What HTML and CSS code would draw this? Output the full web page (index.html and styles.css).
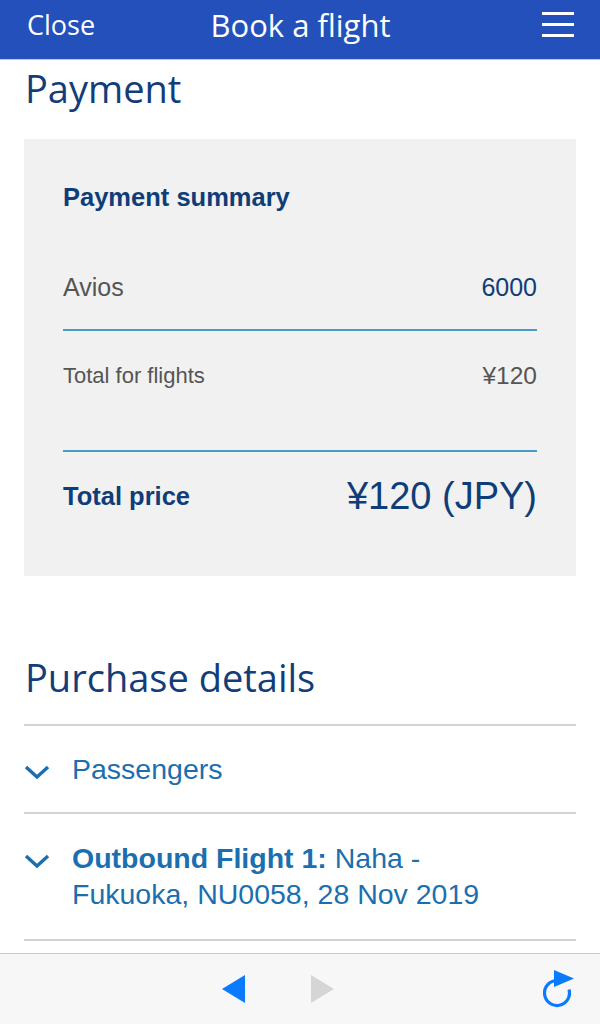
FILE: index.html
```html
<!DOCTYPE html>
<html lang="en">
<head>
    <meta charset="UTF-8">
    <meta name="viewport" content="width=device-width, initial-scale=1.0">
    <title>Book a flight</title>
    <link rel="stylesheet" href="styles.css">
</head>
<body>
    <header class="topbar">
        <a href="#" class="topbar-close">Close</a>
        <h1 class="topbar-title">Book a flight</h1>
        <button class="topbar-menu" aria-label="Menu">
            <span></span><span></span><span></span>
        </button>
    </header>

    <main class="page">
        <h2 class="page-heading">Payment</h2>

        <section class="summary">
            <h3 class="summary-title">Payment summary</h3>
            <div class="summary-row summary-avios">
                <span class="summary-label">Avios</span>
                <span class="summary-value">6000</span>
            </div>
            <div class="summary-row summary-flights">
                <span class="summary-label">Total for flights</span>
                <span class="summary-value">¥120</span>
            </div>
            <div class="summary-row summary-total">
                <span class="summary-label">Total price</span>
                <span class="summary-value">¥120 (JPY)</span>
            </div>
        </section>

        <h2 class="page-heading purchase-heading">Purchase details</h2>

        <ul class="details">
            <li class="details-item">
                <svg class="chevron" viewBox="0 0 26 14" aria-hidden="true"><path d="M2 2 L13 12 L24 2"/></svg>
                <span class="details-text">Passengers</span>
            </li>
            <li class="details-item">
                <svg class="chevron" viewBox="0 0 26 14" aria-hidden="true"><path d="M2 2 L13 12 L24 2"/></svg>
                <span class="details-text"><strong>Outbound Flight 1:</strong> Naha - Fukuoka, NU0058, 28 Nov 2019</span>
            </li>
        </ul>
    </main>

    <nav class="toolbar">
        <svg class="tool tool-back" viewBox="0 0 26 30" aria-hidden="true"><polygon points="24,1 24,29 1,15"/></svg>
        <svg class="tool tool-forward" viewBox="0 0 26 30" aria-hidden="true"><polygon points="2,1 2,29 25,15"/></svg>
        <svg class="tool tool-reload" viewBox="0 0 38 42" aria-hidden="true">
            <path class="reload-arc" d="M19 13.5 A12.5 12.5 0 1 0 31 22.5"/>
            <polygon class="reload-head" points="16,3 16,20 36,11.5"/>
        </svg>
    </nav>
</body>
</html>
```

FILE: styles.css
```css
body {
    margin: 0;
    font-family: "Liberation Sans", Arial, sans-serif;
    background-color: #ffffff;
    color: #555;
}
.topbar {
    display: grid;
    grid-template-columns: 1fr auto 1fr;
    align-items: center;
    height: 60px;
    box-sizing: border-box;
    padding: 0 26px 10px 27px;
    background-color: #2450bc;
    border-bottom: 1px solid #b9c9e6;
    font-family: "Open Sans", "Noto Sans", sans-serif;
}
.topbar-close {
    color: #ffffff;
    text-decoration: none;
    font-size: 27px;
    line-height: 34px;
    padding-top: 1px;
}
.topbar-title {
    margin: 0;
    color: #ffffff;
    font-size: 31px;
    line-height: 38px;
    font-weight: 400;
}
.topbar-menu {
    justify-self: end;
    display: flex;
    flex-direction: column;
    gap: 8px;
    width: 32px;
    padding: 0;
    background: none;
    border: 0;
}
.topbar-menu span {
    display: block;
    height: 3px;
    background-color: #ffffff;
}
.page {
    padding: 0 24px;
}
.page-heading {
    margin: 0;
    padding: 5px 0 0 1px;
    font-family: "Open Sans", "Noto Sans", sans-serif;
    font-weight: 400;
    font-size: 38px;
    line-height: 46px;
    color: #133d78;
}
.summary {
    margin-top: 28px;
    padding: 43px 39px 58px;
    background-color: #f1f1f1;
}
.summary-title {
    margin: 0 0 60px;
    font-size: 25.5px;
    line-height: 30px;
    font-weight: 700;
    color: #0f3d78;
}
.summary-row {
    display: flex;
    justify-content: space-between;
    align-items: center;
}
.summary-avios {
    padding-bottom: 27px;
    border-bottom: 2px solid #4a9bc4;
    font-size: 25px;
    line-height: 30px;
}
.summary-avios .summary-value {
    color: #0f3d78;
}
.summary-flights {
    padding: 30px 0 59px;
    border-bottom: 2px solid #4a9bc4;
    font-size: 22px;
    line-height: 30px;
}
.summary-flights .summary-value {
    font-size: 24.5px;
}
.summary-total {
    padding-top: 22px;
    line-height: 44px;
    color: #0f3d78;
}
.summary-total .summary-label {
    font-size: 25.5px;
    font-weight: 700;
}
.summary-total .summary-value {
    font-size: 38px;
}
.purchase-heading {
    margin-top: 78px;
    padding-top: 0;
}
.details {
    list-style: none;
    margin: 24px 0 0;
    padding: 0;
    border-top: 2px solid #d2d2d2;
}
.details-item {
    display: flex;
    align-items: flex-start;
    gap: 22px;
    padding: 25px 0;
    border-bottom: 2px solid #d2d2d2;
    color: #1c6fae;
    font-size: 28.5px;
    line-height: 36px;
}
.details-item + .details-item {
    padding: 26px 0 27px;
}
.details-text {
    max-width: 420px;
}
.details-text strong {
    font-weight: 700;
}
.chevron {
    flex: none;
    width: 26px;
    height: 14px;
    margin-top: 14px;
    fill: none;
    stroke: #1c6fae;
    stroke-width: 3.4;
}
.toolbar {
    position: fixed;
    left: 0;
    right: 0;
    bottom: 0;
    height: 70px;
    display: flex;
    align-items: center;
    padding-right: 24px;
    background-color: #f7f7f8;
    border-top: 1px solid #c9c9c9;
}
.tool {
    flex: none;
}
.tool-back {
    width: 26px;
    height: 30px;
    margin-left: 221px;
    fill: #0a7aff;
}
.tool-forward {
    width: 26px;
    height: 30px;
    margin-left: 62px;
    fill: #d5d5d5;
}
.tool-reload {
    width: 38px;
    height: 42px;
    margin-left: auto;
    margin-bottom: 2px;
}
.reload-arc {
    fill: none;
    stroke: #0a7aff;
    stroke-width: 3.2;
}
.reload-head {
    fill: #0a7aff;
}
```
